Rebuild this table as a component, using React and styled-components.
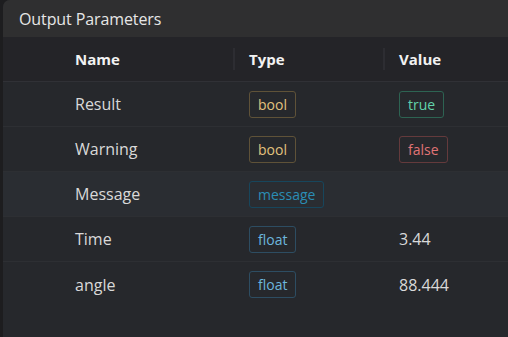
import React from "react";
import styled, { createGlobalStyle } from "styled-components";

const Global = createGlobalStyle`
  html, body { margin: 0; padding: 0; background: #1d1d1f; }
  body { font-family: "Open Sans", "Noto Sans", sans-serif; }
  #root { height: 337px; }
`;

const Frame = styled.div`
  height: 337px;
  padding-left: 3px;
  background: #1d1d1f;
  box-sizing: border-box;
  display: flex;
`;

const Panel = styled.section`
  flex: 1;
  display: flex;
  flex-direction: column;
  background: #26282c;
  border-top-left-radius: 7px;
  overflow: hidden;
`;

const TitleBar = styled.header`
  height: 37px;
  flex: none;
  display: flex;
  align-items: center;
  padding-left: 16px;
  background: #2f2f30;
  color: #e6e6e6;
  font-size: 16px;
  letter-spacing: -0.1px;
`;

const Grid = styled.div`
  display: grid;
  grid-template-columns: 231px 150px 1fr;
`;

const HeadCell = styled.div`
  position: relative;
  height: 44px;
  display: flex;
  align-items: center;
  padding-left: ${(p) => (p.$first ? 72 : 15)}px;
  background: #242428;
  border-bottom: 1px solid #303136;
  color: #f2f2f2;
  font-size: 15px;
  font-weight: 700;

  &::before {
    content: "";
    display: ${(p) => (p.$first ? "none" : "block")};
    position: absolute;
    left: -1px;
    top: 11px;
    width: 2px;
    height: 22px;
    background: #2d2d32;
  }
`;

const Cell = styled.div`
  height: 45px;
  display: flex;
  align-items: center;
  padding-left: ${(p) => (p.$first ? 72 : 15)}px;
  background: ${(p) => (p.$hl ? "#2a2d32" : "#26282c")};
  border-bottom: ${(p) => (p.$last ? "none" : "1px solid #2d2f33")};
  box-sizing: border-box;
  color: #d9d9d9;
  font-size: 16px;
`;

const tones = {
  bool: { fg: "#e2c27e", bd: "#5f5238" },
  message: { fg: "#2a8db5", bd: "#17465c" },
  float: { fg: "#6cb6dd", bd: "#2d4d62" },
  true: { fg: "#62d3ab", bd: "#2d6352" },
  false: { fg: "#e07476", bd: "#643a3c" },
};

const Badge = styled.span`
  display: inline-flex;
  align-items: center;
  height: 27px;
  padding: 0 8px;
  box-sizing: border-box;
  border: 1px solid ${(p) => tones[p.$tone].bd};
  border-radius: 3px;
  color: ${(p) => tones[p.$tone].fg};
  font-size: 14px;
`;

const rows = [
  { name: "Result", type: "bool", value: { badge: "true" } },
  { name: "Warning", type: "bool", value: { badge: "false" } },
  { name: "Message", type: "message", value: null, hl: true },
  { name: "Time", type: "float", value: { text: "3.44" } },
  { name: "angle", type: "float", value: { text: "88.444" } },
];

export default function App() {
  return (
    <>
      <Global />
      <Frame>
        <Panel>
          <TitleBar>Output Parameters</TitleBar>
          <Grid>
            <HeadCell $first>Name</HeadCell>
            <HeadCell>Type</HeadCell>
            <HeadCell>Value</HeadCell>
            {rows.map((r, i) => {
              const last = i === rows.length - 1;
              return (
                <React.Fragment key={r.name}>
                  <Cell $first $hl={r.hl} $last={last}>{r.name}</Cell>
                  <Cell $hl={r.hl} $last={last}>
                    <Badge $tone={r.type}>{r.type}</Badge>
                  </Cell>
                  <Cell $hl={r.hl} $last={last}>
                    {r.value && r.value.badge && (
                      <Badge $tone={r.value.badge}>{r.value.badge}</Badge>
                    )}
                    {r.value && r.value.text}
                  </Cell>
                </React.Fragment>
              );
            })}
          </Grid>
        </Panel>
      </Frame>
    </>
  );
}
